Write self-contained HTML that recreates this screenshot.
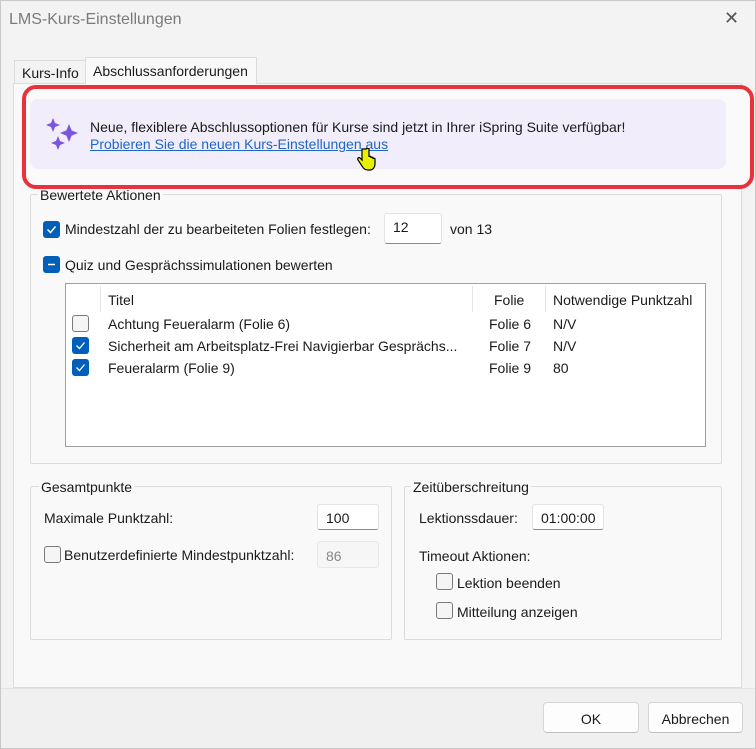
<!DOCTYPE html>
<html><head><meta charset="utf-8"><style>
*{box-sizing:border-box;margin:0;padding:0}
body{width:756px;height:749px;overflow:hidden;background:#f3f3f3;font-family:"Liberation Sans",sans-serif;font-size:14px;color:#1a1a1a;position:relative}
.a{position:absolute;white-space:nowrap}
.cb{position:absolute;width:17px;height:17px;border-radius:3px;background:#005fb8;}
.cb.off{background:#f5f5f5;border:1px solid #7a7a7a}
.cb svg{position:absolute;left:3px;top:3px}
.inp{position:absolute;background:#fff;border:1px solid #e3e3e3;border-bottom:1px solid #8a8a8a;border-radius:3px;padding:5px 0 0 8px}
.grp{position:absolute;border:1px solid #dcdcdc;border-radius:2px}
.lg{position:absolute;background:#f9f9f9;padding:0 2px}
.btn{position:absolute;background:#fdfdfd;border:1px solid #d6d6d6;border-bottom-color:#c0c0c0;border-radius:4px;text-align:center;padding-top:8px}
</style></head><body>
<div class="a" style="left:0;top:0;width:756px;height:749px;border:1px solid #c8c8c8;pointer-events:none"></div>
<div class="a" style="left:9px;top:11px;font-size:16px;color:#7a7a7a">LMS-Kurs-Einstellungen</div>
<div class="a" style="left:724px;top:8px;font-size:18px;color:#555">✕</div>
<div class="a" style="left:14px;top:60px;width:72px;height:23px;border:1px solid #dcdcdc;border-bottom:none;background:#f3f3f3;padding:4px 0 0 7px">Kurs-Info</div>
<div class="a" style="left:85px;top:57px;width:172px;height:27px;border:1px solid #dcdcdc;border-bottom:none;background:#f9f9f9;padding:5px 0 0 7px;z-index:2">Abschlussanforderungen</div>
<div class="a" style="left:13px;top:83px;width:729px;height:605px;border:1px solid #dcdcdc;background:#f9f9f9"></div>
<div class="a" style="left:1px;top:688px;width:754px;height:60px;background:#f0f0f0;border-top:1px solid #e4e4e4"></div>
<div class="btn" style="left:543px;top:702px;width:96px;height:31px">OK</div>
<div class="btn" style="left:648px;top:702px;width:95px;height:31px">Abbrechen</div>
<div class="grp" style="left:30px;top:194px;width:692px;height:270px"></div>
<div class="lg" style="left:38px;top:187px">Bewertete Aktionen</div>
<div class="cb" style="left:43px;top:221px"><svg width="11" height="11"><path d="M1.5 5.5l3 3 5-6" stroke="#fff" stroke-width="1.5" fill="none"/></svg></div>
<div class="a" style="left:65px;top:221px">Mindestzahl der zu bearbeiteten Folien festlegen:</div>
<div class="inp" style="left:384px;top:213px;width:58px;height:31px">12</div>
<div class="a" style="left:450px;top:221px">von 13</div>
<div class="cb" style="left:43px;top:256px"><svg width="11" height="11"><path d="M2 5.5h7" stroke="#fff" stroke-width="1.5"/></svg></div>
<div class="a" style="left:65px;top:257px">Quiz und Gesprächssimulationen bewerten</div>
<div class="a" style="left:65px;top:283px;width:641px;height:164px;background:#fff;border:1px solid #a0a0a0"></div>
<div class="a" style="left:100px;top:286px;width:1px;height:26px;background:#e5e5e5"></div>
<div class="a" style="left:472px;top:286px;width:1px;height:26px;background:#e5e5e5"></div>
<div class="a" style="left:545px;top:286px;width:1px;height:26px;background:#e5e5e5"></div>
<div class="a" style="left:108px;top:292px">Titel</div>
<div class="a" style="left:494px;top:292px">Folie</div>
<div class="a" style="left:553px;top:292px">Notwendige Punktzahl</div>
<div class="cb off" style="left:72px;top:315px"></div>
<div class="a" style="left:108px;top:316px">Achtung Feueralarm (Folie 6)</div>
<div class="a" style="left:489px;top:316px">Folie 6</div><div class="a" style="left:553px;top:316px">N/V</div>
<div class="cb" style="left:72px;top:337px"><svg width="11" height="11"><path d="M1.5 5.5l3 3 5-6" stroke="#fff" stroke-width="1.3" fill="none"/></svg></div>
<div class="a" style="left:108px;top:338px">Sicherheit am Arbeitsplatz-Frei Navigierbar Gesprächs...</div>
<div class="a" style="left:489px;top:338px">Folie 7</div><div class="a" style="left:553px;top:338px">N/V</div>
<div class="cb" style="left:72px;top:359px"><svg width="11" height="11"><path d="M1.5 5.5l3 3 5-6" stroke="#fff" stroke-width="1.3" fill="none"/></svg></div>
<div class="a" style="left:108px;top:360px">Feueralarm (Folie 9)</div>
<div class="a" style="left:489px;top:360px">Folie 9</div><div class="a" style="left:553px;top:360px">80</div>
<div class="grp" style="left:30px;top:486px;width:362px;height:154px"></div>
<div class="lg" style="left:39px;top:479px">Gesamtpunkte</div>
<div class="a" style="left:44px;top:510px">Maximale Punktzahl:</div>
<div class="inp" style="left:317px;top:504px;width:62px;height:26px;padding-top:5px">100</div>
<div class="cb off" style="left:44px;top:546px"></div>
<div class="a" style="left:64px;top:547px">Benutzerdefinierte Mindestpunktzahl:</div>
<div class="inp" style="left:317px;top:541px;width:62px;height:27px;background:#f6f6f6;border-color:#e8e8e8;color:#888;padding-top:6px">86</div>
<div class="grp" style="left:404px;top:486px;width:318px;height:154px"></div>
<div class="lg" style="left:411px;top:479px">Zeitüberschreitung</div>
<div class="a" style="left:419px;top:510px">Lektionssdauer:</div>
<div class="inp" style="left:532px;top:504px;width:72px;height:26px">01:00:00</div>
<div class="a" style="left:419px;top:548px">Timeout Aktionen:</div>
<div class="cb off" style="left:436px;top:573px"></div>
<div class="a" style="left:457px;top:575px">Lektion beenden</div>
<div class="cb off" style="left:436px;top:602px"></div>
<div class="a" style="left:457px;top:604px">Mitteilung anzeigen</div>
<div class="a" style="left:22px;top:85px;width:732px;height:104px;border:4px solid #e8323c;border-radius:14px;background:#fafafa;z-index:3"></div>
<div class="a" style="left:30px;top:99px;width:696px;height:70px;background:#f1edfa;border-radius:8px;z-index:4"></div>
<svg class="a" style="left:46px;top:118px;z-index:5" width="36" height="36" viewBox="0 0 36 36" fill="#7b54e0"><path d="M7 0l2 5 5 2-5 2-2 5-2-5-5-2 5-2z"/><path d="M23 6l2.6 6.4L32 15l-6.4 2.6L23 24l-2.6-6.4L14 15l6.4-2.6z"/><path d="M12 18l2 5 5 2-5 2-2 5-2-5-5-2 5-2z"/></svg>
<div class="a" style="left:90px;top:119px;z-index:5;color:#1a1a1a">Neue, flexiblere Abschlussoptionen für Kurse sind jetzt in Ihrer iSpring Suite verfügbar!</div>
<div class="a" style="left:90px;top:136px;z-index:5;color:#2066c8;text-decoration:underline">Probieren Sie die neuen Kurs-Einstellungen aus</div>
<svg class="a" style="left:356px;top:148px;z-index:6" width="20" height="24" viewBox="0 0 20 24"><path d="M6 1v11l-2-2c-1-1-3 0-2 2l4 6c1 2 3 4 6 4h2c3 0 5-3 5-6v-5c0-1-2-1-2 0v-1c0-1-2-1-2 0v-1c0-1-2-1-2 0v-8c0-1-3-1-3 0z" fill="#e8f000" stroke="#000" stroke-width="1.2"/></svg>
</body></html>
